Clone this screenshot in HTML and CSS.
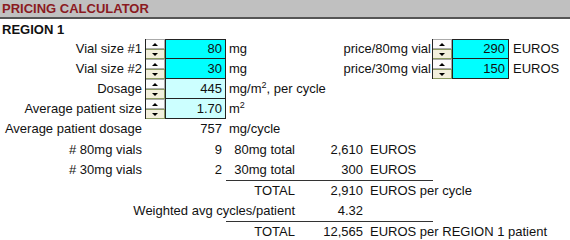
FILE: index.html
```html
<!DOCTYPE html>
<html lang="en">
<head>
    <meta charset="UTF-8">
    <meta name="viewport" content="width=device-width, initial-scale=1.0">
    <title>Pricing Calculator</title>
    <link rel="stylesheet" href="styles.css">
</head>
<body>
    <div class="title">PRICING CALCULATOR</div>
    <div class="region">REGION 1</div>

    <!-- Inputs with spinners -->
    <div class="inputs">
        <div class="label">Vial size #1</div>
        <div class="spin"><span class="up"></span><span class="down"></span></div>
        <div class="box first">80</div>
        <div class="mid"><span>mg</span><span>price/80mg vial</span></div>
        <div class="spin"><span class="up"></span><span class="down"></span></div>
        <div class="box first">290</div>
        <div class="unit">EUROS</div>

        <div class="label">Vial size #2</div>
        <div class="spin"><span class="up"></span><span class="down"></span></div>
        <div class="box">30</div>
        <div class="mid"><span>mg</span><span>price/30mg vial</span></div>
        <div class="spin"><span class="up"></span><span class="down"></span></div>
        <div class="box">150</div>
        <div class="unit">EUROS</div>

        <div class="label">Dosage</div>
        <div class="spin"><span class="up"></span><span class="down"></span></div>
        <div class="box light">445</div>
        <div class="mid wide"><span>mg/m<sup>2</sup>, per cycle</span></div>

        <div class="label">Average patient size</div>
        <div class="spin"><span class="up"></span><span class="down"></span></div>
        <div class="box light">1.70</div>
        <div class="mid wide"><span>m<sup>2</sup></span></div>
    </div>

    <!-- Calculated values -->
    <div class="results">
        <div class="label">Average patient dosage</div>
        <div class="num">757</div>
        <div class="text span3">mg/cycle</div>

        <div class="label">#&nbsp;80mg vials</div>
        <div class="num">9</div>
        <div class="name">80mg total</div>
        <div class="value">2,610</div>
        <div class="text">EUROS</div>

        <div class="label">#&nbsp;30mg vials</div>
        <div class="num">2</div>
        <div class="name ruled">30mg total</div>
        <div class="value ruled">300</div>
        <div class="text ruled short">EUROS</div>

        <div class="name">TOTAL</div>
        <div class="value">2,910</div>
        <div class="text">EUROS per cycle</div>

        <div class="name ruled">Weighted avg cycles/patient</div>
        <div class="value ruled">4.32</div>
        <div class="text ruled short"></div>

        <div class="name">TOTAL</div>
        <div class="value">12,565</div>
        <div class="text">EUROS per REGION 1 patient</div>
    </div>
</body>
</html>
```

FILE: styles.css
```css
body {
    margin: 0;
    width: 570px;
    font-family: "Liberation Sans", Arial, sans-serif;
    font-size: 13px;
    color: #111;
    background: #fff;
}
.title {
    height: 17px;
    line-height: 17px;
    padding-left: 2px;
    background: #c0c0c0;
    border-bottom: 2px solid #555;
    color: #8b1a1f;
    font-weight: bold;
}
.region {
    height: 20px;
    line-height: 21px;
    padding-left: 2px;
    font-weight: bold;
}
.inputs {
    display: grid;
    grid-template-columns: 145px 20px 61px 1fr 20px 57px 61px;
    grid-auto-rows: 20px;
}
.label {
    text-align: right;
    padding-right: 3px;
    line-height: 20px;
    white-space: nowrap;
}
.spin {
    display: flex;
    flex-direction: column;
    border-left: 1px solid #222;
}
.spin span {
    flex: 1;
    display: flex;
    align-items: center;
    justify-content: center;
}
.spin .up {
    background: #fbfbfb;
    border: 1px solid #aaa;
    border-left: none;
}
.spin .down {
    background: #f2efdc;
    border: 1px solid #8c9a62;
    border-left: none;
}
.spin .up::after {
    content: "";
    border-left: 3px solid transparent;
    border-right: 3px solid transparent;
    border-bottom: 3px solid #000;
}
.spin .down::after {
    content: "";
    border-left: 3px solid transparent;
    border-right: 3px solid transparent;
    border-top: 3px solid #000;
}
.box {
    background: #00ffff;
    border: 1px solid #222;
    border-top: none;
    text-align: right;
    padding-right: 3px;
    line-height: 19px;
}
.box.first {
    border-top: 1px solid #222;
    line-height: 18px;
}
.box.light {
    background: #ccffff;
}
.mid {
    display: flex;
    justify-content: space-between;
    padding-left: 3px;
    padding-right: 1px;
    line-height: 20px;
    white-space: nowrap;
}
.mid.wide {
    grid-column: 4 / -1;
}
.unit {
    padding-left: 4px;
    line-height: 20px;
}
sup {
    font-size: 9px;
    line-height: 0;
}
.results {
    display: grid;
    grid-template-columns: 145px 81px 71px 70px 66px 1fr;
    grid-template-rows: 21px 20px 21px 20px 21px 20px;
}
.results > div {
    line-height: 20px;
    white-space: nowrap;
}
.results .label {
    grid-column: 1;
}
.num {
    grid-column: 2;
    text-align: right;
    padding-right: 4px;
}
.name {
    grid-column: 3;
    display: flex;
    justify-content: flex-end;
    padding-right: 2px;
}
.value {
    grid-column: 4;
    text-align: right;
    padding-right: 4px;
}
.text {
    grid-column: 5 / -1;
    padding-left: 3px;
}
.text.short {
    grid-column: 5 / 6;
}
.text.span3 {
    grid-column: 3 / -1;
}
.ruled {
    border-bottom: 1px solid #333;
}
```
